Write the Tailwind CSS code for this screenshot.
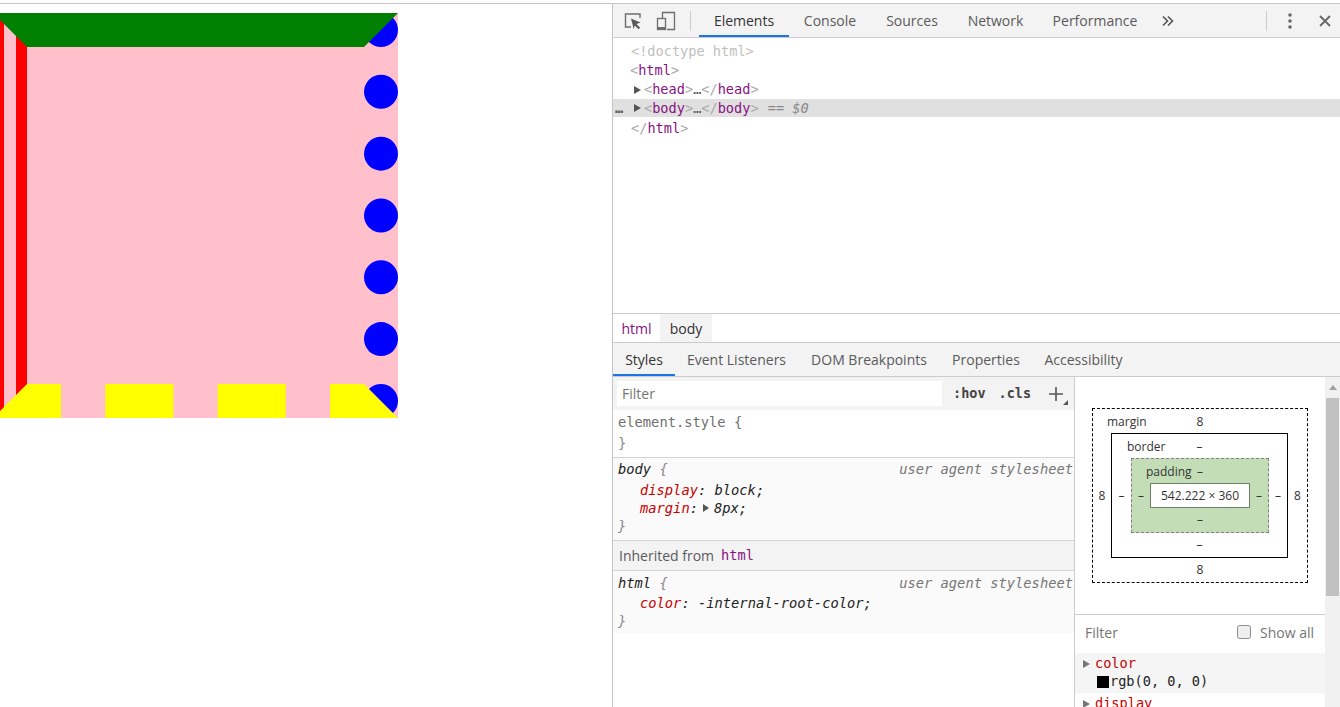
<!DOCTYPE html>
<html lang="en">
<head>
<meta charset="UTF-8">
<title>DevTools borders</title>
<script src="https://cdn.jsdelivr.net/npm/@tailwindcss/browser@4"></script>
</head>
<body class="h-[707px] w-[1340px] overflow-hidden bg-white font-['Open_Sans',sans-serif] text-[14px] text-[#5a5a5a]">
<div class="h-[3px]"></div>
<div class="flex h-[704px] border-t border-[#c4c4c4]">

  <!-- page, scrolled sideways so the box is cut at the window edge -->
  <div class="w-[612px] shrink-0 overflow-hidden pt-[9px]">
    <div class="-ml-[7px] box-border h-[405px] w-[405px] border-[34px] border-t-[#008000] border-r-[#0000ff] border-b-[#ffff00] border-l-[#ff0000] bg-[#ffc0cb] [border-style:solid_dotted_dashed_double]"></div>
  </div>

  <!-- devtools -->
  <div class="flex min-w-0 flex-1 flex-col border-l border-[#c4c4c4]">

    <!-- main toolbar -->
    <div class="flex h-[34px] shrink-0 items-center border-b border-[#cccccc] bg-[#f3f3f3]">
      <svg class="ml-[11px] h-[20px] w-[20px]" viewBox="0 0 20 20" fill="none">
        <path d="M7 16H1.5V3H16v4" stroke="#6e6e6e" stroke-width="1.4"/>
        <path d="M7 7.5l9.5 4-4 1.4 3.6 3.8-1.5 1.5-3.7-3.8-1.2 3.6z" fill="#5a5a5a"/>
      </svg>
      <svg class="ml-[12px] h-[20px] w-[20px]" viewBox="0 0 20 20" fill="none">
        <path d="M6.5 7V1.5h12v17H11" stroke="#6e6e6e" stroke-width="1.3"/>
        <rect x="1.5" y="7.5" width="8" height="11" stroke="#6e6e6e" stroke-width="1.3"/>
        <rect x="1.5" y="16" width="8" height="2.5" fill="#6e6e6e"/>
      </svg>
      <div class="ml-[14px] h-[20px] w-px bg-[#cccccc]"></div>
      <div class="ml-[8px] flex h-full">
        <div class="flex h-full w-[90px] items-center justify-center border-b-2 border-[#1a73e8] pt-[2px] text-[#333333]">Elements</div>
        <div class="flex w-[82px] items-center justify-center">Console</div>
        <div class="flex w-[82px] items-center justify-center">Sources</div>
        <div class="flex w-[85px] items-center justify-center">Network</div>
        <div class="flex w-[114px] items-center justify-center">Performance</div>
      </div>
      <svg class="ml-[9px] h-[12px] w-[14px]" viewBox="0 0 14 12" fill="none" stroke="#555555" stroke-width="1.6">
        <path d="M2 1.5L6.5 6 2 10.5M7 1.5L11.5 6 7 10.5"/>
      </svg>
      <div class="ml-auto h-[20px] w-px bg-[#cccccc]"></div>
      <svg class="ml-[21px] h-[16px] w-[4px]" viewBox="0 0 4 16" fill="#666666">
        <circle cx="2" cy="2" r="1.8"/><circle cx="2" cy="8" r="1.8"/><circle cx="2" cy="14" r="1.8"/>
      </svg>
      <svg class="mr-[9px] ml-[27px] h-[12px] w-[12px]" viewBox="0 0 12 12" fill="none" stroke="#666666" stroke-width="1.8">
        <path d="M1 1l10 10M11 1L1 11"/>
      </svg>
    </div>

    <!-- elements tree -->
    <div class="h-[275px] shrink-0 pt-[4px] font-['DejaVu_Sans_Mono',monospace] text-[13.6px] leading-[19px] text-[#881280]">
      <div class="pl-[18px] text-[#c0c0c0]">&lt;!doctype html&gt;</div>
      <div class="pl-[17px]"><span class="text-[#a8a8a8]">&lt;</span>html<span class="text-[#a8a8a8]">&gt;</span></div>
      <div class="flex items-center pl-[21px]">
        <span class="mr-[3px] h-0 w-0 border-y-[4.5px] border-l-[7px] border-y-transparent border-l-[#555555]"></span>
        <span><span class="text-[#a8a8a8]">&lt;</span>head<span class="text-[#a8a8a8]">&gt;</span><span class="text-[#555555]">…</span><span class="text-[#a8a8a8]">&lt;/</span>head<span class="text-[#a8a8a8]">&gt;</span></span>
      </div>
      <div class="flex h-[18px] items-center bg-[#e0e0e0] pl-[2px]">
        <span class="w-[19px] font-bold text-[#555555]">…</span>
        <span class="mr-[3px] h-0 w-0 border-y-[4.5px] border-l-[7px] border-y-transparent border-l-[#555555]"></span>
        <span><span class="text-[#a8a8a8]">&lt;</span>body<span class="text-[#a8a8a8]">&gt;</span><span class="text-[#555555]">…</span><span class="text-[#a8a8a8]">&lt;/</span>body<span class="text-[#a8a8a8]">&gt;</span><span class="ml-[1px] text-[#888888] italic"> == $0</span></span>
      </div>
      <div class="pt-[2px] pl-[18px]"><span class="text-[#a8a8a8]">&lt;/</span>html<span class="text-[#a8a8a8]">&gt;</span></div>
    </div>

    <!-- breadcrumb -->
    <div class="flex h-[30px] shrink-0 items-stretch border-y border-[#cccccc] text-[#303030]">
      <div class="flex w-[47px] items-center justify-center text-[#881280]">html</div>
      <div class="flex w-[52px] items-center justify-center bg-[#f3f3f3]">body</div>
    </div>

    <!-- sidebar tabs -->
    <div class="flex h-[34px] shrink-0 border-b border-[#cccccc] bg-[#f3f3f3]">
      <div class="flex w-[62px] items-center justify-center border-b-2 border-[#1a73e8] pt-[2px] text-[#333333]">Styles</div>
      <div class="flex w-[123px] items-center justify-center">Event Listeners</div>
      <div class="flex w-[142px] items-center justify-center">DOM Breakpoints</div>
      <div class="flex w-[92px] items-center justify-center">Properties</div>
      <div class="flex w-[103px] items-center justify-center">Accessibility</div>
    </div>

    <div class="flex min-h-0 flex-1">

      <!-- styles pane -->
      <div class="flex w-[462px] shrink-0 flex-col border-r border-[#cccccc]">
        <div class="flex h-[33px] shrink-0 items-center bg-[#f3f3f3] pl-[4px]">
          <div class="flex h-[25px] w-[325px] items-center bg-white pb-px pl-[5px] text-[#757575]">Filter</div>
          <span class="ml-[11px] font-['DejaVu_Sans_Mono',monospace] text-[13.5px] font-bold text-[#444444]">:hov</span>
          <span class="ml-[13px] font-['DejaVu_Sans_Mono',monospace] text-[13.5px] font-bold text-[#444444]">.cls</span>
          <div class="relative ml-[18px] h-[14px] w-[14px]">
            <svg class="h-[14px] w-[14px]" viewBox="0 0 14 14" stroke="#555555" stroke-width="1.6"><path d="M7 0v14M0 7h14"/></svg>
            <span class="absolute top-[13px] left-[14px] h-0 w-0 border-b-[5px] border-l-[5px] border-b-[#555555] border-l-transparent"></span>
          </div>
        </div>
        <div class="font-['DejaVu_Sans_Mono',monospace] text-[13.75px] leading-[19px] text-[#222222]">
          <div class="h-[48px] border-b border-[#d4d4d4] pt-[3px] pl-[5px] text-[#6f6f6f]">
            <div>element.style {</div>
            <div class="pt-[2px] text-[#888888]">}</div>
          </div>
          <div class="h-[83px] border-b border-[#d4d4d4] bg-[#fafafa] pl-[5px] italic">
            <div class="flex justify-between pt-[2px] pr-px"><span>body <span class="text-[#888888]">{</span></span><span class="text-[#777777]">user agent stylesheet</span></div>
            <div class="pt-[2px] pl-[22px] leading-[18px]"><span class="text-[#c80000]">display</span>: block;</div>
            <div class="flex items-center pl-[22px] leading-[18px]"><span class="text-[#c80000]">margin</span>:<span class="mx-[5px] h-0 w-0 border-y-[4px] border-l-[6px] border-y-transparent border-l-[#555555]"></span>8px;</div>
            <div class="leading-[18px] text-[#888888]">}</div>
          </div>
          <div class="flex h-[30px] items-center border-b border-[#d4d4d4] bg-[#f3f3f3] pb-px pl-[6px] font-['Open_Sans',sans-serif] text-[14px] text-[#5a5a5a]">Inherited from<span class="ml-[7px] font-['DejaVu_Sans_Mono',monospace] text-[13.6px] text-[#881280]">html</span></div>
          <div class="h-[62px] bg-[#fafafa] pl-[5px] italic">
            <div class="flex justify-between pt-[3px] pr-px"><span>html <span class="text-[#888888]">{</span></span><span class="text-[#777777]">user agent stylesheet</span></div>
            <div class="pt-px pl-[22px] leading-[18px]"><span class="text-[#c80000]">color</span>: -internal-root-color;</div>
            <div class="leading-[18px] text-[#888888]">}</div>
          </div>
        </div>
      </div>

      <!-- computed pane -->
      <div class="flex min-w-0 flex-1 flex-col">
        <div class="h-[238px] shrink-0 border-b border-[#cccccc] pt-[31px] pl-[17px] text-[12px] text-[#333333]">
          <div class="box-border grid h-[175px] w-[216px] grid-cols-[18px_1fr_19px] grid-rows-[24px_1fr_24px] border border-dashed border-black">
            <div class="col-span-3 grid grid-cols-[1fr_auto_1fr] items-center pt-px"><span class="pl-[14px]">margin</span><span>8</span></div>
            <div class="flex items-center justify-center">8</div>
            <div class="box-border grid grid-cols-[19px_1fr_18px] grid-rows-[24px_1fr_24px] border border-black">
              <div class="col-span-3 grid grid-cols-[1fr_auto_1fr] items-center pt-px"><span class="pl-[15px]">border</span><span>–</span></div>
              <div class="flex items-center justify-center">–</div>
              <div class="box-border grid grid-cols-[18px_1fr_18px] grid-rows-[24px_1fr_24px] border border-dashed border-[#808080] bg-[#c3deb7]">
                <div class="col-span-3 grid grid-cols-[1fr_auto_1fr] items-center pt-px"><span class="pl-[14px]">padding</span><span>–</span></div>
                <div class="flex items-center justify-center">–</div>
                <div class="flex items-center justify-center border border-[#6f7f68] bg-white whitespace-nowrap">542.222 × 360</div>
                <div class="flex items-center justify-center">–</div>
                <div class="col-span-3 flex items-center justify-center">–</div>
              </div>
              <div class="flex items-center justify-center">–</div>
              <div class="col-span-3 flex items-center justify-center">–</div>
            </div>
            <div class="flex items-center justify-center">8</div>
            <div class="col-span-3 flex items-center justify-center">8</div>
          </div>
        </div>
        <div class="flex h-[35px] shrink-0 items-center pb-px pl-[10px] text-[#757575]">
          <span>Filter</span>
          <span class="ml-auto h-[14px] w-[14px] rounded-[3px] border border-[#8f8f8f] bg-[#efefef]"></span>
          <span class="mr-[11px] ml-[9px]">Show all</span>
        </div>
        <div class="pt-[3px] font-['DejaVu_Sans_Mono',monospace] text-[13.6px] leading-[19px]">
          <div class="h-[40px] bg-[#f5f5f5] pt-[1px]">
            <div class="flex items-center pl-[8px] text-[#c80000]"><span class="mr-[5px] h-0 w-0 border-y-[4.5px] border-l-[7px] border-y-transparent border-l-[#777777]"></span>color</div>
            <div class="-mt-px flex items-center pl-[22px] text-[#222222]"><span class="mr-[1px] h-[12px] w-[12px] bg-black"></span>rgb(0, 0, 0)</div>
          </div>
          <div class="flex items-center pt-[1px] pl-[8px] text-[#c80000]"><span class="mr-[5px] h-0 w-0 border-y-[4.5px] border-l-[7px] border-y-transparent border-l-[#777777]"></span>display</div>
        </div>
      </div>

      <!-- scrollbar -->
      <div class="w-[15px] shrink-0 bg-[#f1f1f1] px-px">
        <div class="flex h-[21px] items-center justify-center"><span class="h-0 w-0 border-x-[4px] border-b-[5px] border-x-transparent border-b-[#a0a0a0]"></span></div>
        <div class="h-[198px] bg-[#c1c1c1]"></div>
      </div>
    </div>
  </div>
</div>
</body>
</html>
